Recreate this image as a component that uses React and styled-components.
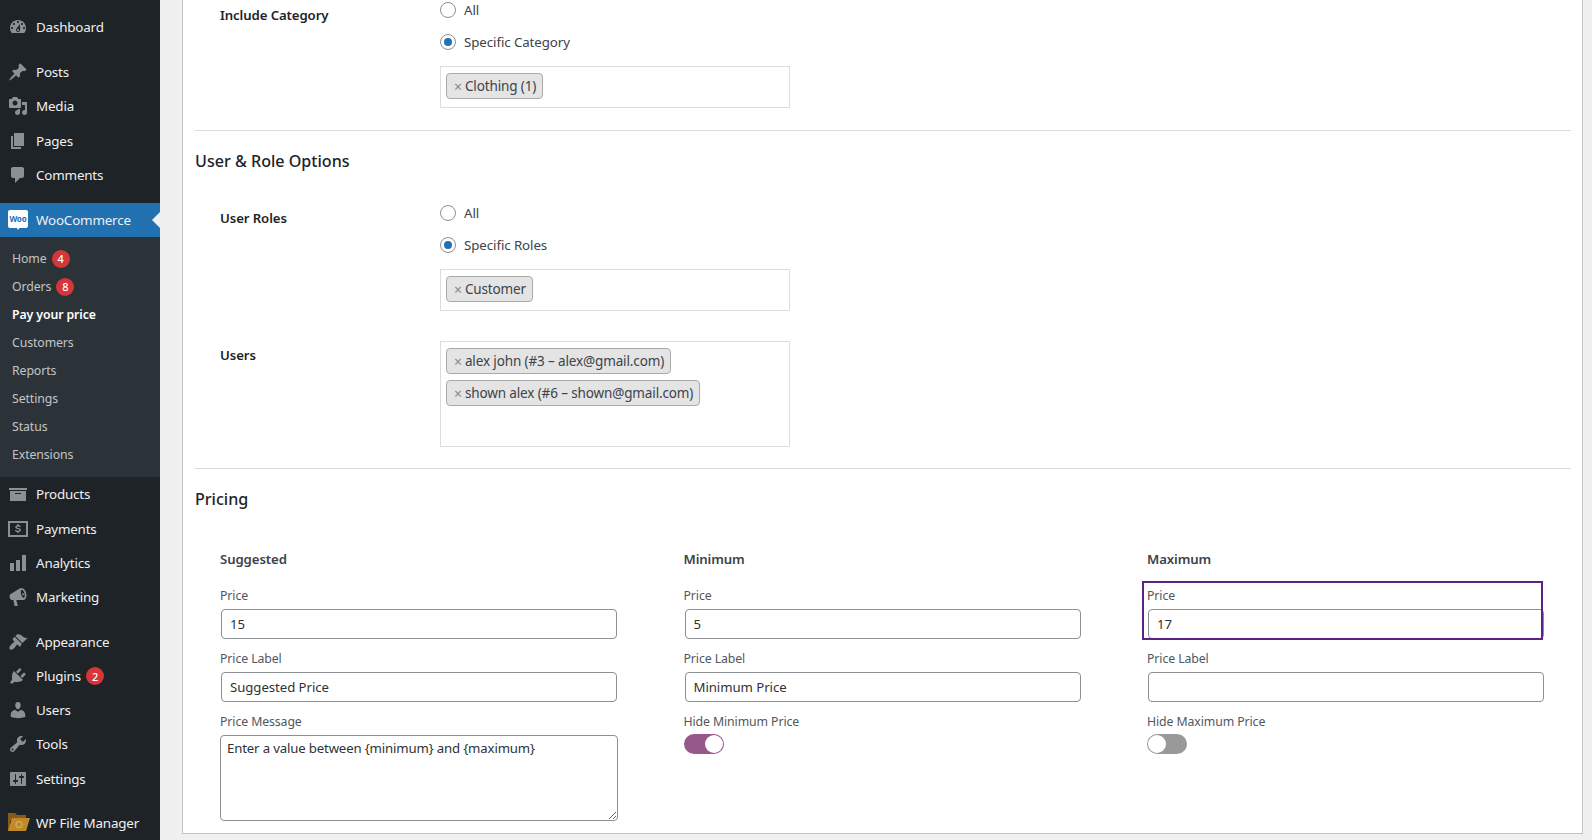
import styled, { createGlobalStyle } from "styled-components";

const GlobalStyle = createGlobalStyle`
  html, body {
    margin: 0;
    padding: 0;
    height: 100%;
    overflow: hidden;
    background: #f0f0f1;
    font-family: "Noto Sans", "Open Sans", sans-serif;
    font-size: 13px;
    color: #3c434a;
  }
  * { box-sizing: border-box; }
`;

const Page = styled.div`
  display: flex;
  height: 840px;
  overflow: hidden;
`;

const Sidebar = styled.nav`
  width: 160px;
  flex: none;
  background: #1d2327;
  padding-top: 10px;
  display: flex;
  flex-direction: column;
`;

const MenuGroup = styled.div`
  margin-bottom: ${(p) => p.$gap || "11px"};
`;

const MenuRow = styled.div`
  position: relative;
  height: 34.2px;
  display: flex;
  align-items: center;
  padding-left: ${(p) => (p.$wide ? "7px" : "8px")};
  gap: ${(p) => (p.$wide ? "5px" : "8px")};
  font-size: 13.4px;
  letter-spacing: -0.18px;
  color: #f0f0f1;
  background: ${(p) => (p.$active ? "#2271b1" : "transparent")};

  svg {
    flex: none;
  }

  ${(p) =>
    p.$active &&
    `
    &::after {
      content: "";
      position: absolute;
      right: 0;
      top: 50%;
      margin-top: -8px;
      border: 8px solid transparent;
      border-right-color: #f0f0f1;
    }
  `}
`;

const RowBadge = styled.span`
  width: 18px;
  height: 18px;
  margin-left: -3px;
  border-radius: 50%;
  background: #d63638;
  color: #fff;
  font-size: 11px;
  font-weight: 500;
  display: inline-flex;
  align-items: center;
  justify-content: center;
`;

const SubMenu = styled.div`
  background: #2c3338;
  padding: 8px 0 8.7px;
`;

const SubItem = styled.div`
  height: 28px;
  display: flex;
  align-items: center;
  gap: 5px;
  padding-left: 12px;
  font-size: 12.3px;
  letter-spacing: -0.1px;
  color: ${(p) => (p.$current ? "#fff" : "#c3c4c7")};
  font-weight: ${(p) => (p.$current ? 600 : 400)};
`;

const Badge = styled(RowBadge)`
  margin-left: 0;
`;

const Main = styled.main`
  flex: 1;
  min-width: 0;
  padding: 0 9px 6px 22px;
`;

const Card = styled.div`
  height: 100%;
  background: #fff;
  border: 1px solid #c3c4c7;
  border-top: 0;
  padding: 0 11px 0 12px;
  overflow: hidden;
`;

const OptionRow = styled.div`
  display: flex;
  padding-left: 25px;
  margin-top: ${(p) => p.$top || "0"};
`;

const RowLabel = styled.div`
  width: 220px;
  flex: none;
  padding-top: ${(p) => p.$top || "5px"};
  font-size: 13.2px;
  font-weight: 600;
  line-height: 20px;
  letter-spacing: -0.1px;
  color: #1d2327;
`;

const Fields = styled.div`
  display: flex;
  flex-direction: column;
`;

const RadioLine = styled.label`
  height: ${(p) => p.$height || "32px"};
  margin-top: ${(p) => p.$top || "0"};
  display: flex;
  align-items: center;
  gap: 8px;
  font-size: 13.3px;
  letter-spacing: -0.08px;
  color: #3c434a;
`;

const Radio = styled.input.attrs({ type: "radio" })`
  appearance: none;
  width: 16px;
  height: 16px;
  margin: 0;
  border-radius: 50%;
  border: 1px solid #8c8f94;
  background: #fff;
  display: grid;
  place-items: center;

  &:checked::before {
    content: "";
    width: 8px;
    height: 8px;
    border-radius: 50%;
    background: #2271b1;
  }
`;

const ChipBox = styled.div`
  width: 350px;
  height: ${(p) => p.$height};
  margin-top: ${(p) => p.$top || "0"};
  border: 1px solid #ddd;
  padding: 6px 5px 0;
  display: flex;
  flex-direction: column;
  align-items: flex-start;
  gap: 6px;
`;

const Chip = styled.span`
  height: 26px;
  display: inline-flex;
  align-items: center;
  padding: 0 6px 0 7px;
  background: #e4e4e4;
  border: 1px solid #aaa;
  border-radius: 4px;
  font-size: 13.5px;
  letter-spacing: -0.13px;
  color: #3c434a;
  white-space: nowrap;

  i {
    font-style: normal;
    color: #888;
    margin-right: 3px;
    font-size: 14px;
  }
`;

const Divider = styled.hr`
  margin: ${(p) => p.$margin};
  border: 0;
  border-top: 1px solid #dcdcde;
`;

const SectionTitle = styled.h2`
  margin: 0;
  height: ${(p) => p.$height};
  padding-top: ${(p) => p.$top};
  font-size: 16.1px;
  font-weight: 500;
  line-height: 22px;
  color: #1d2327;
`;

const PriceGrid = styled.div`
  display: grid;
  grid-template-columns: repeat(3, 397px);
  column-gap: 66.5px;
  padding-left: 25px;
`;

const PriceColumn = styled.div`
  display: flex;
  flex-direction: column;
`;

const ColumnTitle = styled.div`
  font-size: 13.2px;
  font-weight: 600;
  line-height: 18px;
  letter-spacing: -0.1px;
  color: #3c434a;
  margin-bottom: 19px;
`;

const Field = styled.div`
  position: relative;
  margin-bottom: 11px;
  display: flex;
  flex-direction: column;
`;

const FieldLabel = styled.label`
  font-size: 12.3px;
  line-height: 18px;
  letter-spacing: -0.1px;
  color: #50575e;
  margin-bottom: 4px;
`;

const TextInput = styled.input`
  width: 396px;
  height: 30px;
  margin-left: 1px;
  padding: 0 8px;
  border: 1px solid #8c8f94;
  border-radius: 4px;
  font: inherit;
  font-size: 13.2px;
  letter-spacing: -0.05px;
  color: #2c3338;
  background: #fff;
  outline: 0;
`;

const TextArea = styled.textarea`
  width: 398px;
  height: 86px;
  padding: 2px 6px;
  border: 1px solid #8c8f94;
  border-radius: 4px;
  font: inherit;
  font-size: 13.2px;
  letter-spacing: -0.15px;
  line-height: 20px;
  color: #2c3338;
  background: #fff;
  outline: 0;
`;

const Toggle = styled.span`
  width: 40px;
  height: 20px;
  margin-top: -1px;
  border-radius: 10px;
  background: ${(p) => (p.$on ? "#96588a" : "#999")};
  display: flex;
  align-items: center;
  justify-content: ${(p) => (p.$on ? "flex-end" : "flex-start")};
  padding: 0 1px;

  &::before {
    content: "";
    width: 18px;
    height: 18px;
    border-radius: 50%;
    background: #fff;
  }
`;

const Highlight = styled.div`
  position: absolute;
  left: -5px;
  top: -6px;
  width: 401px;
  height: 59px;
  border: 2px solid #5b2386;
  pointer-events: none;
`;

const dashicons = {
  dashboard:
    "M3.76 16h12.48c1.1-1.37 1.76-3.11 1.76-5 0-4.42-3.58-8-8-8s-8 3.58-8 8c0 1.89.66 3.63 1.76 5zM10 4c.55 0 1 .45 1 1s-.45 1-1 1-1-.45-1-1 .45-1 1-1zM6 6c.55 0 1 .45 1 1s-.45 1-1 1-1-.45-1-1 .45-1 1-1zm8 0c.55 0 1 .45 1 1s-.45 1-1 1-1-.45-1-1 .45-1 1-1zm-5.37 5.55L12 7v6c0 1.1-.9 2-2 2s-2-.9-2-2c0-.57.24-1.08.63-1.45zM4 10c.55 0 1 .45 1 1s-.45 1-1 1-1-.45-1-1 .45-1 1-1zm12 0c.55 0 1 .45 1 1s-.45 1-1 1-1-.45-1-1 .45-1 1-1zm-5 3c0-.55-.45-1-1-1s-1 .45-1 1 .45 1 1 1 1-.45 1-1z",
  post: "M10.44 3.02l1.82-1.82 6.36 6.35-1.83 1.82c-1.05-.68-2.48-.57-3.41.36l-.75.75c-.92.93-1.04 2.35-.35 3.41l-1.83 1.82-2.41-2.41-2.8 2.79c-.42.42-3.38 2.71-3.8 2.29s1.86-3.39 2.28-3.81l2.79-2.79L4.1 9.36l1.83-1.82c1.05.69 2.48.57 3.4-.36l.75-.75c.93-.92 1.05-2.35.36-3.41z",
  media:
    "M13 11V4c0-.55-.45-1-1-1h-1.67L9 1H5L3.67 3H2c-.55 0-1 .45-1 1v7c0 .55.45 1 1 1h10c.55 0 1-.45 1-1zM7 4.5c1.38 0 2.5 1.12 2.5 2.5S8.38 9.5 7 9.5 4.5 8.38 4.5 7 5.62 4.5 7 4.5zM14 6h5v10.5c0 1.38-1.12 2.5-2.5 2.5S14 17.88 14 16.5s1.12-2.5 2.5-2.5c.17 0 .34.02.5.05V9h-3V6zm-4 8.05V13h2v3.5c0 1.38-1.12 2.5-2.5 2.5S7 17.88 7 16.5 8.12 14 9.5 14c.17 0 .34.02.5.05z",
  page: "M6 15V2h10v13H6zm-1 1h8v2H3V5h2v11z",
  comments:
    "M5 2h9c1.1 0 2 .9 2 2v7c0 1.1-.9 2-2 2h-2l-5 5v-5H5c-1.1 0-2-.9-2-2V4c0-1.1.9-2 2-2z",
  archive: "M19 4v2H1V4h18zM2 7h16v10H2V7zm11 3V9H7v1h6z",
  money:
    "M0 2h20v16H0V2zm2 2v12h16V4H2zM9.300 5h1.400v1.100c1 .1 1.800.6 2.200 1.300l-1.200.7c-.3-.4-.8-.7-1.600-.7-.8 0-1.300.3-1.300.7s.4.6 1.600.8c1.500.3 2.600.8 2.600 2.100 0 1.100-.9 1.800-2.300 2v1H9.300v-1c-1.200-.1-2.100-.7-2.500-1.500l1.200-.7c.4.6 1.100 1 2 1 .9 0 1.400-.3 1.400-.8s-.5-.7-1.700-.9c-1.400-.3-2.500-.8-2.500-2 0-1 .9-1.700 2.100-1.900V5z",
  chart: "M18 18V2h-4v16h4zm-6 0V7H8v11h4zm-6 0v-8H2v8h4z",
  megaphone:
    "M18.15 5.94c.46 1.62.38 3.22-.02 4.48-.42 1.28-1.26 2.18-2.3 2.48-.16.06-.26.06-.4.06-.3.06-.4.06-.4.06h-6.8l1.6 5.5c.1.3-.1.5-.4.5H6.9c-.3 0-.4-.2-.5-.5l-1-5.5H4.25c-.5.06-1.08-.18-1.54-.62s-.88-1.08-1.06-1.88c-.24-.8-.2-1.56-.02-2.2.18-.62.58-1.08 1.06-1.3l9-5.4c.2-.14.5-.3.84-.42 1.02-.36 2.24.02 3.3.92 1.06.9 1.94 2.26 2.32 3.78zm-2.3 5.04c.82-.68 1.08-2.52.58-4.52-.52-1.98-1.7-3.48-2.74-3.62-.9.4-1.1 2.4-.6 4.4.5 1.9 1.7 3.5 2.76 3.74zm-1.5-3.5c-.2-.8 0-1.4.5-1.5.4-.1.9.4 1.1 1.1.2.8 0 1.4-.5 1.5-.4.1-.9-.4-1.1-1.1z",
  appearance:
    "M14.48 11.06L7.41 3.99l1.5-1.5c.5-.56 2.3-.47 3.51.32 1.21.8 1.43 1.28 2.91 2.1 1.18.64 2.45 1.26 4.45.85zm-.71.71L6.7 4.7 4.93 6.47c-.39.39-.39 1.02 0 1.41l1.06 1.06c.39.39.39 1.03 0 1.42-.6.6-1.43 1.11-2.21 1.69-.35.26-.7.53-1.01.84-1.43 1.43-1.82 3.34-.88 4.28.94.94 2.85.55 4.28-.88.31-.31.58-.66.84-1.01.58-.78 1.09-1.61 1.69-2.21.39-.39 1.02-.39 1.41 0l1.06 1.06c.39.39 1.02.39 1.41 0z",
  plugins:
    "M13.11 4.36L9.87 7.6 8 5.73l3.24-3.24c.35-.34 1.05-.2 1.56.32.52.51.66 1.21.31 1.55zm-8 1.77l.91-1.12 9.01 9.01-1.19.84c-.71.71-2.63 1.16-3.82 1.16H6.14L4.9 17.26c-.59.59-1.54.59-2.12 0-.59-.58-.59-1.53 0-2.12l1.24-1.24v-3.88c0-1.13.4-3.19 1.09-3.89zm7.26 3.97l3.24-3.24c.34-.35 1.04-.21 1.55.31.52.51.66 1.21.31 1.55l-3.24 3.25z",
  users:
    "M10 9.25c-2.27 0-2.73-3.44-2.73-3.44C7 4.02 7.82 2 9.97 2c2.16 0 2.98 2.02 2.71 3.81 0 0-.41 3.44-2.68 3.44zm0 2.57L12.72 10c2.39 0 4.52 2.33 4.52 4.53v2.49s-3.65 1.13-7.24 1.13c-3.65 0-7.24-1.13-7.24-1.13v-2.49c0-2.25 1.94-4.48 4.47-4.48z",
  tools:
    "M16.68 9.77c-1.34 1.34-3.3 1.67-4.95.99l-5.41 6.52c-.99.99-2.59.99-3.58 0s-.99-2.59 0-3.57l6.52-5.42c-.68-1.65-.35-3.61.99-4.95 1.28-1.28 3.12-1.62 4.72-1.06l-2.89 2.89 2.82 2.82 2.86-2.87c.53 1.58.18 3.39-1.08 4.65zM3.81 16.21c.4.39 1.04.39 1.43 0 .4-.4.4-1.04 0-1.43-.39-.4-1.03-.4-1.43 0-.39.39-.39 1.03 0 1.43z",
  settings:
    "M18 16V4c0-.55-.45-1-1-1H3c-.55 0-1 .45-1 1v12c0 .55.45 1 1 1h14c.55 0 1-.45 1-1zM8 11h1c.55 0 1 .45 1 1s-.45 1-1 1H8v1.5c0 .28-.22.5-.5.5s-.5-.22-.5-.5V13H6c-.55 0-1-.45-1-1s.45-1 1-1h1V5.5c0-.28.22-.5.5-.5s.5.22.5.5V11zm5-2h-1c-.55 0-1-.45-1-1s.45-1 1-1h1V5.5c0-.28.22-.5.5-.5s.5.22.5.5V7h1c.55 0 1 .45 1 1s-.45 1-1 1h-1v5.5c0 .28-.22.5-.5.5s-.5-.22-.5-.5V9z",
};

const Dashicon = ({ name }) => (
  <svg width="20" height="20" viewBox="0 0 20 20" fill="#8c8f94" fillRule="evenodd">
    <path d={dashicons[name]} />
  </svg>
);

const WooIcon = () => (
  <svg width="20" height="20" viewBox="0 0 20 20">
    <path
      d="M2 0h16c1.100 0 2 .9 2 2v14c0 1.100-.9 2-2 2h-6.500l-1.500 2-1-2H2c-1.100 0-2-.9-2-2V2C0 .9.900 0 2 0z"
      fill="#fff"
    />
    <text
      x="10"
      y="11.500"
      textAnchor="middle"
      fontSize="8"
      fontWeight="700"
      fontFamily="Noto Sans, sans-serif"
      fill="#2271b1"
    >
      Woo
    </text>
  </svg>
);

const FolderIcon = () => (
  <svg width="24" height="20" viewBox="0 0 24 20">
    <path d="M1 0h7l2 2h9v6H1z" fill="#8a5a1c" />
    <path d="M1 0h2v18H1z" fill="#8a5a1c" />
    <path d="M5 5h18l-4 13H1z" fill="#c08a2a" />
    <circle cx="12" cy="11.500" r="3.600" fill="#d9b267" />
    <circle cx="12" cy="11.500" r="2.500" fill="#c08a2a" />
  </svg>
);

const Menu = ({ items, gap }) => (
  <MenuGroup $gap={gap}>
    {items.map(([name, icon, badge]) => (
      <MenuRow key={name}>
        <Dashicon name={icon} />
        {name}
        {badge && <RowBadge>{badge}</RowBadge>}
      </MenuRow>
    ))}
  </MenuGroup>
);

const wooSubItems = [
  ["Home", 4],
  ["Orders", 8],
  ["Pay your price"],
  ["Customers"],
  ["Reports"],
  ["Settings"],
  ["Status"],
  ["Extensions"],
];

const App = () => {
  return (
    <>
      <GlobalStyle />
      <Page>
        <Sidebar>
          <Menu items={[["Dashboard", "dashboard"]]} />
          <Menu
            items={[
              ["Posts", "post"],
              ["Media", "media"],
              ["Pages", "page"],
              ["Comments", "comments"],
            ]}
          />
          <MenuRow $active>
            <WooIcon />
            WooCommerce
          </MenuRow>
          <SubMenu>
            {wooSubItems.map(([name, badge]) => (
              <SubItem key={name} $current={name === "Pay your price"}>
                {name}
                {badge && <Badge>{badge}</Badge>}
              </SubItem>
            ))}
          </SubMenu>
          <Menu
            gap="10.700px"
            items={[
              ["Products", "archive"],
              ["Payments", "money"],
              ["Analytics", "chart"],
              ["Marketing", "megaphone"],
            ]}
          />
          <Menu
            gap="10.600px"
            items={[
              ["Appearance", "appearance"],
              ["Plugins", "plugins", 2],
              ["Users", "users"],
              ["Tools", "tools"],
              ["Settings", "settings"],
            ]}
          />
          <MenuRow $wide>
            <FolderIcon />
            WP File Manager
          </MenuRow>
        </Sidebar>

        <Main>
          <Card>
            <OptionRow>
              <RowLabel>Include Category</RowLabel>
              <Fields>
                <RadioLine $height="20px">
                  <Radio name="cat" />
                  All
                </RadioLine>
                <RadioLine $top="6px">
                  <Radio name="cat" defaultChecked />
                  Specific Category
                </RadioLine>
                <ChipBox $height="42px" $top="8px">
                  <Chip>
                    <i>×</i>Clothing (1)
                  </Chip>
                </ChipBox>
              </Fields>
            </OptionRow>
            <Divider $margin="22px 0 0" />
            <SectionTitle $height="64px" $top="19px">
              User &amp; Role Options
            </SectionTitle>
            <OptionRow>
              <RowLabel $top="13px">User Roles</RowLabel>
              <Fields>
                <RadioLine $top="2px">
                  <Radio name="role" />
                  All
                </RadioLine>
                <RadioLine>
                  <Radio name="role" defaultChecked />
                  Specific Roles
                </RadioLine>
                <ChipBox $height="42px" $top="8px">
                  <Chip>
                    <i>×</i>Customer
                  </Chip>
                </ChipBox>
              </Fields>
            </OptionRow>
            <OptionRow $top="30px">
              <RowLabel $top="4px">Users</RowLabel>
              <ChipBox $height="106px">
                <Chip>
                  <i>×</i>alex john (#3 – alex@gmail.com)
                </Chip>
                <Chip>
                  <i>×</i>shown alex (#6 – shown@gmail.com)
                </Chip>
              </ChipBox>
            </OptionRow>
            <Divider $margin="21px 0 0" />
            <SectionTitle $height="81px" $top="19px">
              Pricing
            </SectionTitle>
            <PriceGrid>
              <PriceColumn>
                <ColumnTitle>Suggested</ColumnTitle>
                <Field>
                  <FieldLabel>Price</FieldLabel>
                  <TextInput defaultValue="15" readOnly />
                </Field>
                <Field>
                  <FieldLabel>Price Label</FieldLabel>
                  <TextInput defaultValue="Suggested Price" readOnly />
                </Field>
                <Field>
                  <FieldLabel>Price Message</FieldLabel>
                  <TextArea
                    defaultValue="Enter a value between {minimum} and {maximum}"
                    readOnly
                  />
                </Field>
              </PriceColumn>
              <PriceColumn>
                <ColumnTitle>Minimum</ColumnTitle>
                <Field>
                  <FieldLabel>Price</FieldLabel>
                  <TextInput defaultValue="5" readOnly />
                </Field>
                <Field>
                  <FieldLabel>Price Label</FieldLabel>
                  <TextInput defaultValue="Minimum Price" readOnly />
                </Field>
                <Field>
                  <FieldLabel>Hide Minimum Price</FieldLabel>
                  <Toggle $on />
                </Field>
              </PriceColumn>
              <PriceColumn>
                <ColumnTitle>Maximum</ColumnTitle>
                <Field>
                  <FieldLabel>Price</FieldLabel>
                  <TextInput defaultValue="17" readOnly />
                  <Highlight />
                </Field>
                <Field>
                  <FieldLabel>Price Label</FieldLabel>
                  <TextInput readOnly />
                </Field>
                <Field>
                  <FieldLabel>Hide Maximum Price</FieldLabel>
                  <Toggle />
                </Field>
              </PriceColumn>
            </PriceGrid>
          </Card>
        </Main>
      </Page>
    </>
  );
};

export default App;
